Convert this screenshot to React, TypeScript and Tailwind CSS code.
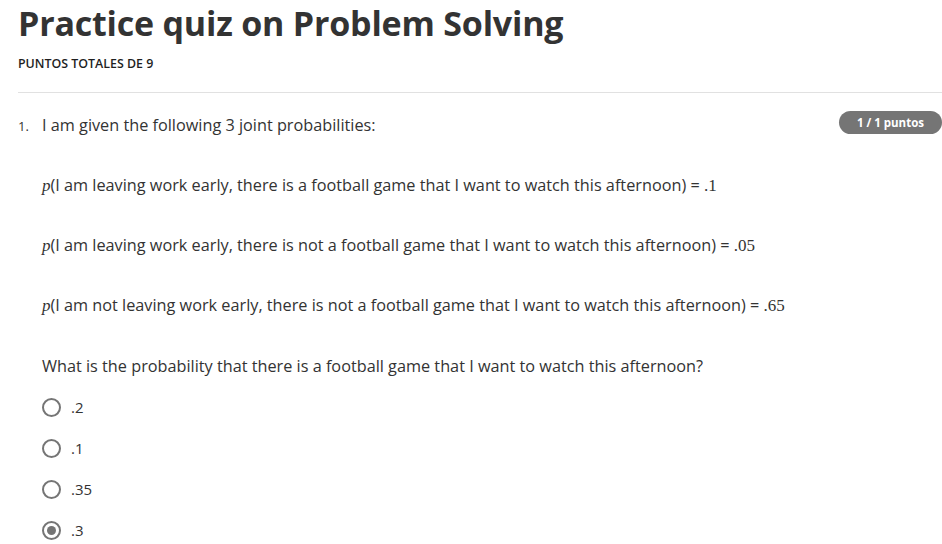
import React from 'react';

const options = [
  { label: '.2', checked: false },
  { label: '.1', checked: false },
  { label: '.35', checked: false },
  { label: '.3', checked: true },
];

function Radio({ checked }: { checked: boolean }) {
  return (
    <span className="flex h-[19px] w-[19px] items-center justify-center rounded-full border-2 border-[#757575] bg-white">
      {checked && <span className="h-[9px] w-[9px] rounded-full bg-[#757575]" />}
    </span>
  );
}

function Prob({ text, value, tall }: { text: string; value: string; tall?: boolean }) {
  return (
    <p className={tall ? 'h-[61px] leading-[22px]' : 'h-[60px] leading-[22px]'}>
      <span className="font-['Liberation_Serif',serif] italic text-[17px]">p</span>
      ({text}) = <span className="font-['Liberation_Serif',serif] text-[17px]">{value}</span>
    </p>
  );
}

export default function App() {
  return (
    <div className="min-h-screen w-[942px] overflow-hidden bg-white pl-[18px] font-['Open_Sans',sans-serif] text-[#333]">
      <h1 className="pt-[1px] text-[34px] font-bold leading-[44px] tracking-[-0.2px] text-[#333]">Practice quiz on Problem Solving</h1>
      <div className="mt-[11px] text-[12.4px] font-semibold uppercase leading-[16px] text-[#1f1f1f]">Puntos totales de 9</div>
      <div className="mt-[20px] border-t border-[#e1e1e1]" />

      <div className="mt-[21px] flex">
        <div className="w-[24px] pt-[1px] text-[13px] leading-[22px]">1.</div>
        <div className="flex-1 text-[16.25px] text-[#333]">
          <div className="flex items-start justify-between">
            <p className="h-[60px] leading-[22px]">I am given the following 3 joint probabilities:</p>
            <span className="-mt-[3px] rounded-full bg-[#757575] px-[18px] py-[3px] text-[11.5px] font-bold leading-[17px] text-white">1 / 1 puntos</span>
          </div>
          <Prob text="I am leaving work early, there is a football game that I want to watch this afternoon" value=".1" />
          <Prob text="I am leaving work early, there is not a football game that I want to watch this afternoon" value=".05" />
          <Prob text="I am not leaving work early, there is not a football game that I want to watch this afternoon" value=".65" tall />
          <p className="h-[32px] leading-[22px]">What is the probability that there is a football game that I want to watch this afternoon?</p>
          <div className="flex flex-col">
            {options.map((o) => (
              <label key={o.label} className="flex h-[41px] items-center gap-[10px]">
                <Radio checked={o.checked} />
                <span className="text-[15px]">{o.label}</span>
              </label>
            ))}
          </div>
        </div>
      </div>
    </div>
  );
}
